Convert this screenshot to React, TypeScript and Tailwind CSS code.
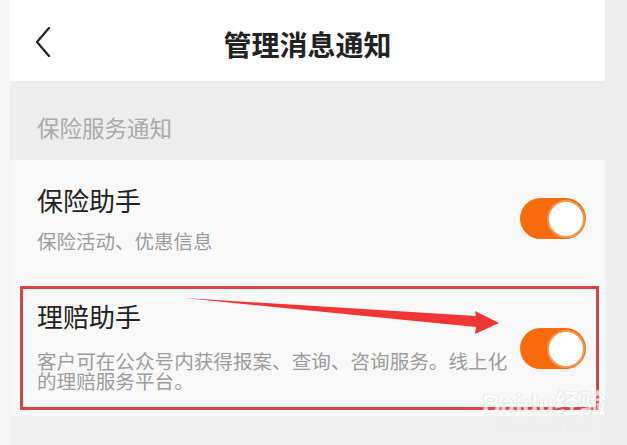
const font = { fontFamily: '"Noto Sans CJK SC", "Noto Sans", sans-serif' };

const Toggle = () => (
  <div className="flex h-[41px] w-[66px] shrink-0 items-center justify-end rounded-full bg-[#f76b0c] pr-[1px]">
    <div className="h-[38px] w-[38px] rounded-full border-2 border-[#f29850] bg-white" />
  </div>
);

const Chevron = () => (
  <svg width="16" height="30" viewBox="0 0 16 30" fill="none">
    <path d="M14 1 L2 15 L14 29" stroke="#222" strokeWidth="2.2" strokeLinecap="round" strokeLinejoin="round" />
  </svg>
);

export default function App() {
  return (
    <div className="relative flex h-[445px] w-[627px] overflow-hidden bg-[#eeeeee]" style={font}>
      <div className="w-[10px] shrink-0 bg-[#f6f6f6]" />
      <div className="flex w-[595px] shrink-0 flex-col bg-[#efefef]">
        <div className="flex h-[81px] items-center bg-white">
          <div className="flex w-[41px] shrink-0 justify-end pt-[2px]">
            <Chevron />
          </div>
          <div className="flex-1 pt-[7px] text-center text-[28px] font-bold leading-none text-[#222]">管理消息通知</div>
          <div className="w-[41px] shrink-0" />
        </div>
        <div className="h-[79px] bg-[#ededed] pl-[27px] pt-[31px] text-[22.5px] leading-[30px] text-[#a9a9a9]">
          保险服务通知
        </div>
        <div className="bg-[#f8f8f8]">
          <div className="flex h-[117px] items-center justify-between pl-[27px] pr-[19px]">
            <div className="flex flex-col">
              <div className="text-[26px] leading-[32px] text-[#222]">保险助手</div>
              <div className="mt-[12px] text-[19.5px] leading-[26px] text-[#9c9c9c]">保险活动、优惠信息</div>
            </div>
            <Toggle />
          </div>
          <div className="mx-[20px] h-px bg-[#ebebeb]" />
          <div className="flex h-[138px] items-start justify-between pl-[27px] pr-[19px] pt-[22px]">
            <div className="flex flex-col">
              <div className="text-[26px] leading-[32px] text-[#222]">理赔助手</div>
              <div className="mt-[19px] w-[480px] text-[19.6px] leading-[20px] text-[#9c9c9c]">
                客户可在公众号内获得报案、查询、咨询服务。线上化的理赔服务平台。
              </div>
            </div>
            <div className="mt-[28px]">
              <Toggle />
            </div>
          </div>
        </div>
      </div>

      {/* annotation overlay */}
      <div className="absolute left-[20px] top-[286px] h-[124px] w-[579px] border-[3px] border-[#d8434a]" />
      <svg className="absolute left-0 top-0" width="627" height="445" viewBox="0 0 627 445">
        <polygon points="184,298 476,316 475,311 499,323 475,334 476,327" fill="#f03535" />
      </svg>
      <div className="absolute left-[482px] top-[390px] flex flex-col items-center opacity-70">
        <div
          className="text-[26px] font-bold leading-[28px] text-white"
          style={{ fontFamily: '"Liberation Sans", "Noto Sans CJK SC", sans-serif', textShadow: '0 0 1px #bbb, 0 0 1px #bbb' }}
        >
          Baidu经验
        </div>
        <div
          className="text-[11px] leading-[14px] text-white"
          style={{ fontFamily: '"Liberation Sans", sans-serif', textShadow: '0 0 1px #ccc' }}
        >
          jingyan.baidu.com
        </div>
      </div>
    </div>
  );
}
